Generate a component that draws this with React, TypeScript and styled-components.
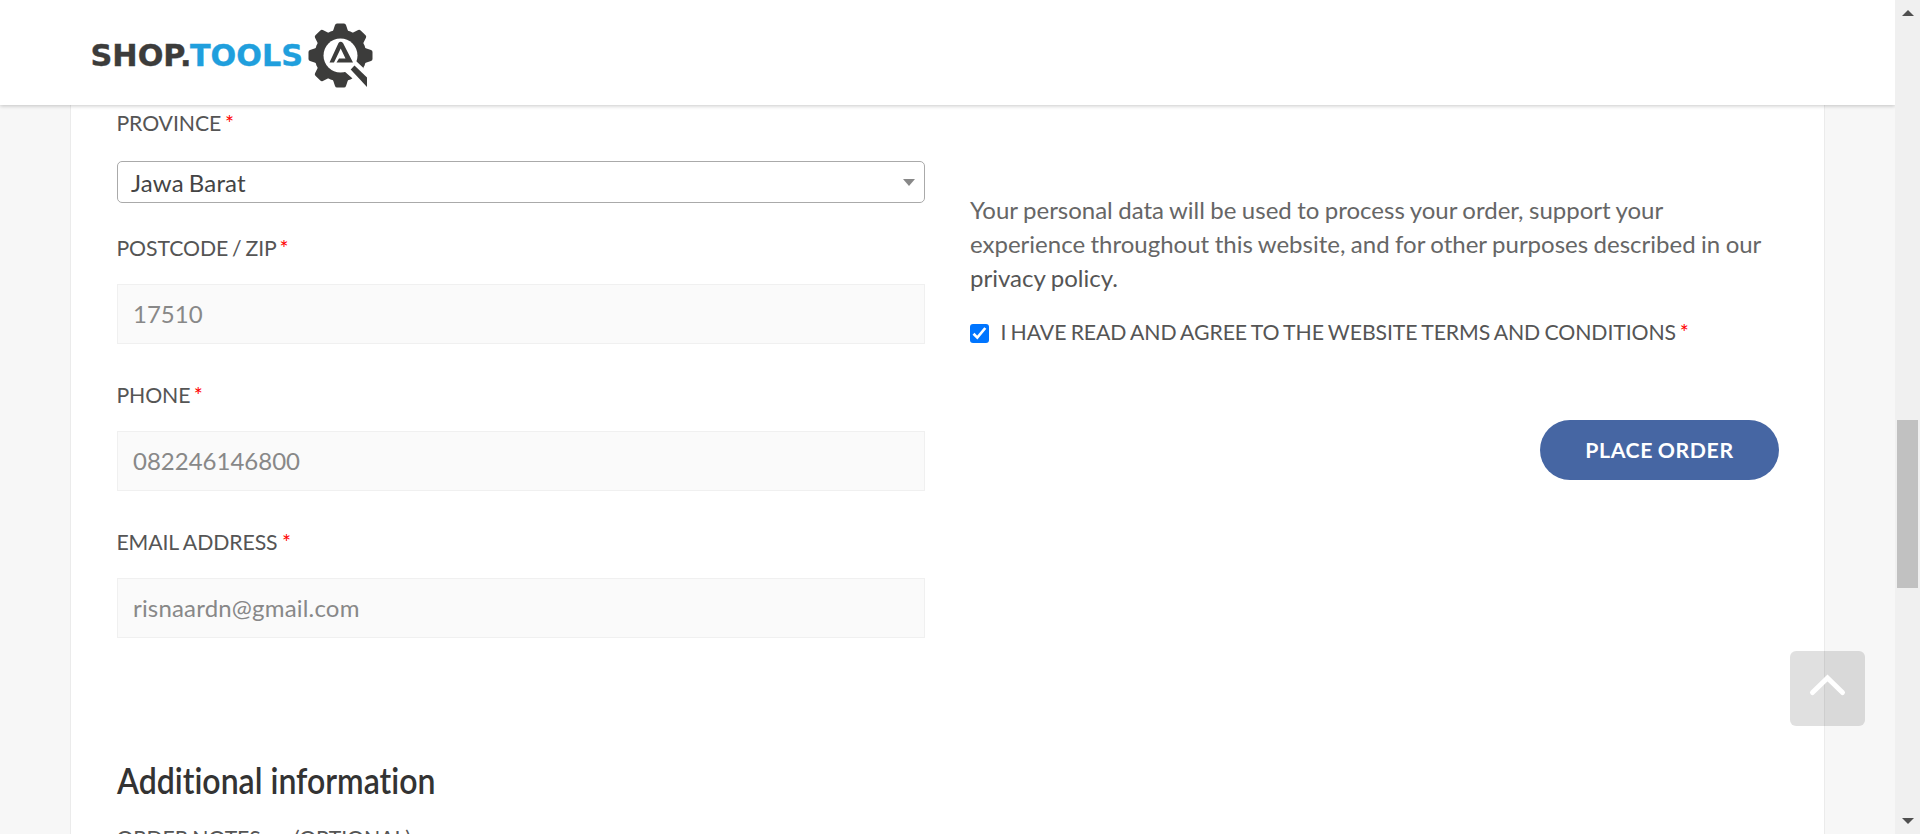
import React from "react";
import styled, { createGlobalStyle } from "styled-components";

const GlobalStyle = createGlobalStyle`
  * { box-sizing: border-box; }
  body { margin: 0; overflow: hidden; background: #f7f7f7; }
`;

const Screen = styled.div`
  display: flex;
  width: 1920px;
  height: 834px;
  overflow: hidden;
  font-family: Lato, sans-serif;
  font-variant-ligatures: none;
  color: #666;
`;

const Page = styled.div`
  display: flex;
  flex-direction: column;
  width: 1895px;
  height: 834px;
  overflow: hidden;
`;

const Header = styled.header`
  position: relative;
  z-index: 2;
  flex: none;
  display: flex;
  height: 105px;
  padding: 20px 0 0 88px;
  background: #fff;
  box-shadow: 0 1px 4px rgba(0, 0, 0, 0.22);
`;

const Panel = styled.main`
  display: flex;
  gap: 45px;
  flex: 1;
  width: 1755px;
  margin-left: 70px;
  padding: 0 45px 0 46px;
  background: #fff;
  border: solid #ebebeb;
  border-width: 0 1px;
`;

const Column = styled.section<{ $top: number; $width: number }>`
  display: flex;
  flex-direction: column;
  width: ${(p) => p.$width}px;
  flex: none;
  padding-top: ${(p) => p.$top}px;
`;

const Field = styled.div<{ $gap: number; $after: number }>`
  display: flex;
  flex-direction: column;
  gap: ${(p) => p.$gap}px;
  margin-bottom: ${(p) => p.$after}px;
`;

const Label = styled.label<{ $wordGap?: number }>`
  height: 34px;
  margin-left: -0.6px;
  line-height: 34px;
  font-size: 21.25px;
  letter-spacing: -0.1px;
  word-spacing: ${(p) => p.$wordGap ?? -1}px;
  text-transform: uppercase;
  white-space: nowrap;
  color: #555;
`;

const Required = styled.span`
  margin-left: -0.5px;
  color: #f00;
`;

const Optional = styled.span`
  margin-left: 29px;
`;

const Select = styled.div`
  display: flex;
  align-items: center;
  justify-content: space-between;
  height: 42px;
  padding: 1px 9px 0 13px;
  border: 1px solid #aaa;
  border-radius: 5px;
  background: #fff;
  color: #444;
  font-size: 24px;
  letter-spacing: 0.15px;
  word-spacing: -1.2px;
  line-height: 34px;
`;

const Caret = styled.span`
  border: solid transparent;
  border-width: 7px 6px 0;
  border-top-color: #888;
`;

const Input = styled.input<{ $track: number }>`
  height: 60px;
  padding: 0 15px 2px;
  border: 1px solid #f0f0f0;
  background: #fafafa;
  color: #888;
  font: 24px Lato, sans-serif;
  letter-spacing: ${(p) => p.$track}px;
  outline: none;
`;

const Heading = styled.h3`
  width: max-content;
  margin: 71px 0 20px;
  font: 600 36px/42px Lato, sans-serif;
  font-variant-ligatures: none;
  color: #333;
  transform: scaleX(0.89);
  transform-origin: left;
`;

const Privacy = styled.p`
  margin: 0;
  font-size: 24px;
  word-spacing: -0.7px;
  line-height: 34px;
  white-space: pre;
`;

const PrivacyLink = styled.span`
  color: #555;
`;

const Terms = styled.div`
  display: flex;
  gap: 12px;
  margin-top: 20px;
`;

const Checkbox = styled.span`
  display: flex;
  width: 19px;
  height: 19px;
  margin-top: 9px;
  border-radius: 3px;
  background: #0075ff;
`;

const PlaceOrder = styled.button`
  align-self: flex-end;
  width: 239px;
  height: 60px;
  margin-top: 71px;
  border: 0;
  border-radius: 30px;
  background: #4666a3;
  color: #fff;
  font: 700 21.25px Lato, sans-serif;
  letter-spacing: 0.6px;
  word-spacing: -1px;
  text-transform: uppercase;
`;

const ScrollTop = styled.button`
  position: absolute;
  left: 1790px;
  top: 651px;
  width: 75px;
  height: 75px;
  padding: 0;
  border: 0;
  border-radius: 6px;
  background: rgba(0, 0, 0, 0.12);
`;

const Scrollbar = styled.aside`
  display: flex;
  flex-direction: column;
  align-items: center;
  width: 25px;
  padding: 10px 0 10px;
  background: #f0f0f0;
`;

const Arrow = styled.span<{ $down?: boolean }>`
  border: solid transparent;
  border-width: ${(p) => (p.$down ? "6px 6px 0" : "0 6px 6px")};
  border-${(p) => (p.$down ? "top" : "bottom")}-color: #505050;
  margin-top: ${(p) => (p.$down ? "auto" : "0")};
`;

const Thumb = styled.span`
  width: 21px;
  height: 168px;
  margin-top: 404px;
  background: #c1c1c1;
`;

const Logo = () => (
  <svg width="290" height="72" viewBox="88 20 290 72">
    <g fontFamily="DejaVu Sans" fontWeight="700" fontSize="30.500" strokeWidth="0.400">
      <text x="90.500" y="65.500" fill="#3c3c3b" stroke="#3c3c3b" textLength="101" lengthAdjust="spacingAndGlyphs">SHOP.</text>
      <text x="190" y="65.500" fill="#209fdd" stroke="#209fdd" textLength="113" lengthAdjust="spacingAndGlyphs">TOOLS</text>
    </g>
    <g fill="#3c3c3b">
      <circle cx="340.5" cy="55.5" r="26" />
      {[0, 45, 90, 135, 180, 225, 270, 315].map((a) => (
        <path key={a} d="M332 34 L335 25 Q335.5 23.5 337 23.5 H344 Q345.500 23.500 346 25 L349 34 Z" transform={`rotate(${a} 340.5 55.5)`} />
      ))}
    </g>
    <circle cx="340.500" cy="55.500" r="17" fill="#fff" />
    <path d="M344 71 L356 61 L364 68.500 L376 80 V98 H362 L352 78 Z" fill="#fff" />
    <path d="M350.700 69.500 L354.500 65.500 L367 77.500 V87 Z" fill="#3c3c3b" />
    <path d="M329.500 62.500 L338.500 43 Q340.500 40.500 343 43 L353 62.500 H336.500 L339 58.500 H345.500 L340.700 48.500 L334 62.500 Z" fill="#3c3c3b" />
  </svg>
);

type TextFieldProps = { label: string; value: string; after: number; track?: number; wordGap?: number };

const TextField = ({ label, value, after, track = 0, wordGap }: TextFieldProps) => (
  <Field $gap={19} $after={after}>
    <Label $wordGap={wordGap}>{label} <Required>*</Required></Label>
    <Input defaultValue={value} $track={track} />
  </Field>
);

export default function App() {
  return (
    <Screen>
      <GlobalStyle />
      <Page>
        <Header><Logo /></Header>
        <Panel>
          <Column $top={1} $width={808}>
            <Field $gap={21} $after={28}>
              <Label>Province <Required>*</Required></Label>
              <Select>Jawa Barat<Caret /></Select>
            </Field>
            <TextField label="Postcode / ZIP" value="17510" after={34} wordGap={-1.4} />
            <TextField label="Phone" value="082246146800" after={34} wordGap={-1.4} />
            <TextField label="Email address" value="risnaardn@gmail.com" after={50} track={0.18} wordGap={-0.3} />
            <Heading>Additional information</Heading>
            <Label>Order notes <Optional>(optional)</Optional></Label>
          </Column>
          <Column $top={88} $width={809}>
            <Privacy>
              {"Your personal data will be used to process your order, support your\nexperience throughout this website, and for other purposes described in our\n"}
              <PrivacyLink>privacy policy.</PrivacyLink>
            </Privacy>
            <Terms>
              <Checkbox>
                <svg width="19" height="19" viewBox="0 0 19 19" fill="none" stroke="#fff" strokeWidth="2.700">
                  <path d="M3.500 9.800 L7.300 13.600 L15.300 4" />
                </svg>
              </Checkbox>
              <Label>I have read and agree to the website terms and conditions <Required>*</Required></Label>
            </Terms>
            <PlaceOrder>Place order</PlaceOrder>
          </Column>
        </Panel>
      </Page>
      <Scrollbar>
        <Arrow />
        <Thumb />
        <Arrow $down />
      </Scrollbar>
      <ScrollTop aria-label="Back to top">
        <svg width="75" height="75" fill="none" stroke="#fff" strokeWidth="5" strokeLinecap="round">
          <path d="M22.500 41.500 L37.500 27 L52.500 41.500" />
        </svg>
      </ScrollTop>
    </Screen>
  );
}
